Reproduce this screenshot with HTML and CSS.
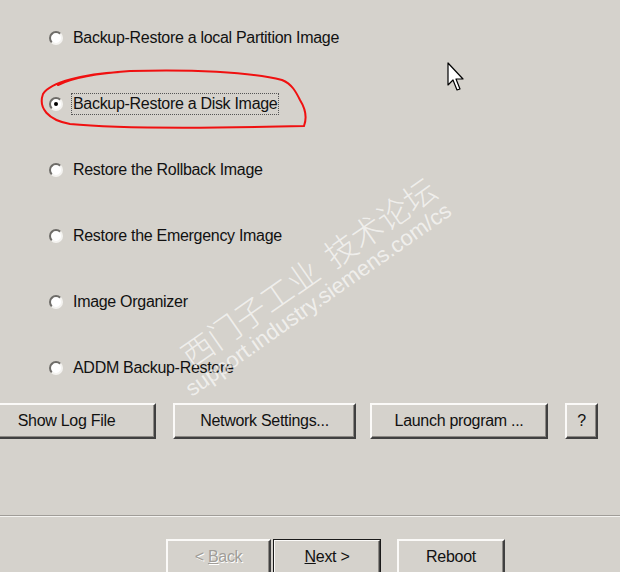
FILE: index.html
```html
<!DOCTYPE html>
<html lang="en">
<head>
  <meta charset="UTF-8" />
  <title>Backup-Restore</title>
  <link rel="stylesheet" href="styles.css">
</head>
<body>
  <div class="dialog">
    <ul class="options">
      <li class="option"><span class="radio"></span><span class="label">Backup-Restore a local Partition Image</span></li>
      <li class="option"><span class="radio checked"></span><span class="label focused">Backup-Restore a Disk Image</span></li>
      <li class="option"><span class="radio"></span><span class="label">Restore the Rollback Image</span></li>
      <li class="option"><span class="radio"></span><span class="label">Restore the Emergency Image</span></li>
      <li class="option"><span class="radio"></span><span class="label">Image Organizer</span></li>
      <li class="option"><span class="radio"></span><span class="label">ADDM Backup-Restore</span></li>
    </ul>

    <div class="tools">
      <button class="btn btn-log">Show Log File</button>
      <button class="btn btn-net">Network Settings...</button>
      <button class="btn btn-launch">Launch program ...</button>
      <button class="btn btn-help">?</button>
    </div>

    <div class="separator"></div>

    <div class="wizard">
      <button class="btn btn-back" disabled>&lt; <u>B</u>ack</button>
      <button class="btn btn-next"><u>N</u>ext &gt;</button>
      <button class="btn btn-reboot">Reboot</button>
    </div>

    <!-- watermark -->
    <div class="watermark">
      <div class="wm-cn">西门子工业&nbsp;&nbsp;技术论坛</div>
      <div class="wm-url">support.industry.siemens.com/cs</div>
    </div>

    <!-- red hand-drawn mark -->
    <svg class="scribble" width="620" height="140" viewBox="0 0 620 140">
      <path d="M120 72 C85 74 50 82 43 94 C38 108 48 120 70 124 C120 129 220 128 304 126 C307 118 305 108 300 100 C296 92 292 84 282 80 C250 72 190 69 130 71 C100 73 72 78 58 85"
            fill="none" stroke="#f01010" stroke-width="2" stroke-linecap="round" />
    </svg>

    <svg class="cursor" width="20" height="32" viewBox="0 0 20 32">
      <path d="M1 1 L1 23 L6 18 L10 28 L13 27 L9 17 L16 17 Z" fill="#fff" stroke="#000" stroke-width="1.2" stroke-linejoin="round" />
    </svg>
  </div>
</body>
</html>
```

FILE: styles.css
```css
body {
  margin: 0;
  background: #d5d2cc;
  font-family: "Liberation Sans", Arial, sans-serif;
  font-size: 16px;
  color: #111;
}

.dialog {
  position: relative;
  width: 620px;
  height: 572px;
  overflow: hidden;
}

.options {
  list-style: none;
  margin: 0;
  padding: 5px 0 0 49px;
}

.option {
  height: 66px;
  display: flex;
  align-items: center;
  gap: 8px;
}

.radio {
  width: 10px;
  height: 10px;
  border-radius: 50%;
  background: #fff;
  border: 2px solid;
  border-color: #6e6c68 #f4f3f0 #f4f3f0 #6e6c68;
  display: flex;
  align-items: center;
  justify-content: center;
  flex: none;
}

.radio.checked::after {
  content: "";
  width: 4px;
  height: 4px;
  border-radius: 50%;
  background: #000;
}

.label {
  letter-spacing: -0.3px;
  padding: 1px 1px;
  border: 1px solid transparent;
}

.label.focused {
  border: 1px dotted #555;
}

.btn {
  font-family: "Liberation Sans", Arial, sans-serif;
  font-size: 16px;
  color: #111;
  background: #d5d2cc;
  height: 36px;
  padding: 0;
  border: 2px solid;
  border-color: #fbfaf8 #404040 #404040 #fbfaf8;
  box-shadow: inset -1px -1px 0 #8c8984;
  letter-spacing: -0.3px;
}

.tools {
  display: flex;
  margin-top: 2px;
}

.btn-log { width: 179px; margin-left: -23px; }
.btn-net { width: 183px; margin-left: 17px; }
.btn-launch { width: 178px; margin-left: 14px; }
.btn-help { width: 33px; margin-left: 17px; }

.separator {
  margin-top: 76px;
  height: 1px;
  background: #a09d98;
  border-bottom: 1px solid #f4f3f0;
}

.wizard {
  display: flex;
  margin-top: 22px;
  padding-left: 166px;
}

.btn-back {
  width: 105px;
  color: #a09d98;
  text-shadow: 1px 1px 0 #fff;
}

.btn-next {
  width: 108px;
  margin-left: 2px;
  outline: 1px solid #1a1a1a;
  outline-offset: -1px;
}

.btn-reboot {
  width: 108px;
  margin-left: 16px;
}

.watermark {
  position: absolute;
  left: 150px;
  top: 358px;
  transform: rotate(-35deg);
  transform-origin: left top;
  color: rgba(255, 255, 255, 0.65);
  pointer-events: none;
  font-family: "Liberation Sans", "Noto Sans CJK SC", sans-serif;
}

.wm-cn {
  font-family: "Noto Sans CJK SC", sans-serif;
  font-size: 32px;
  font-weight: 300;
  margin-left: 28px;
  line-height: 38px;
}

.wm-url {
  font-size: 22px;
  line-height: 22px;
  margin-left: 12px;
}

.scribble {
  position: absolute;
  left: 0;
  top: 0;
}

.cursor {
  position: absolute;
  left: 447px;
  top: 62px;
}
```
